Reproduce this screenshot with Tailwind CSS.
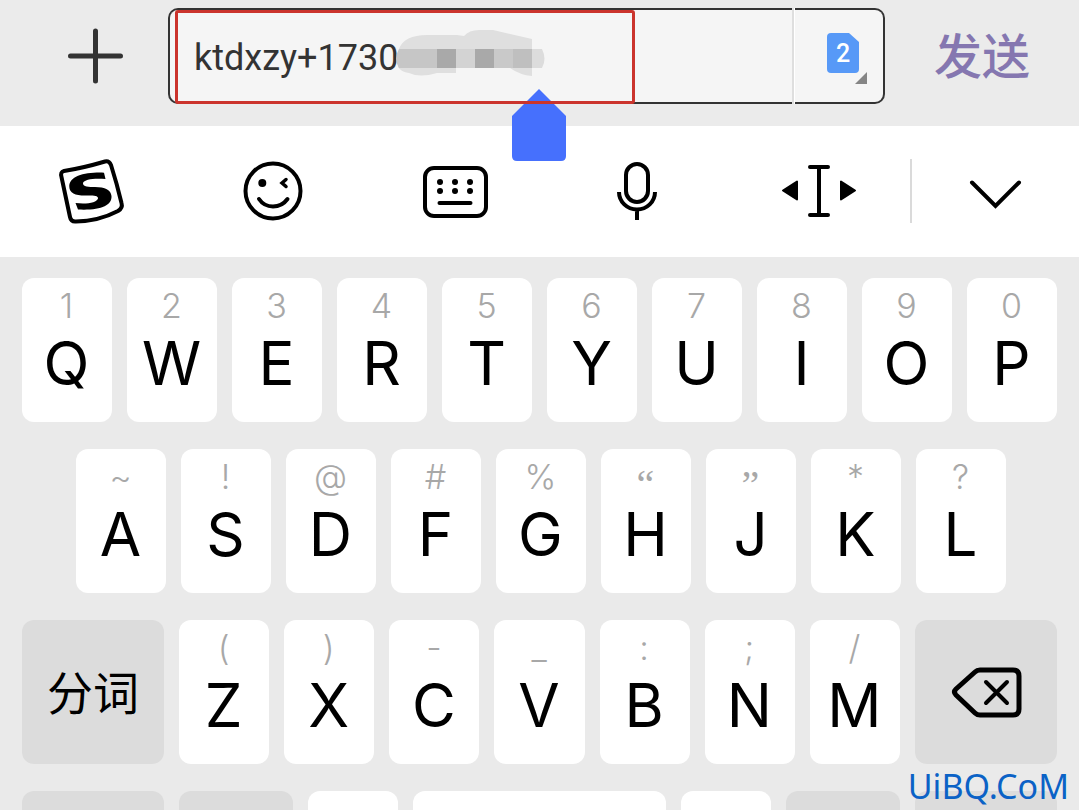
<!DOCTYPE html>
<html lang="zh-CN">
<head>
  <meta charset="UTF-8" />
  <meta name="viewport" content="width=device-width, initial-scale=1" />
  <title>发送短信</title>
  <script src="https://cdn.jsdelivr.net/npm/@tailwindcss/browser@4"></script>
</head>
<body class="h-screen overflow-hidden bg-[#eaeaea] font-[Roboto,'Noto_Sans_CJK_SC',sans-serif] relative">

  <!-- Message bar -->
  <header class="bg-[#ebebeb] flex items-center pt-2 pb-[22px]">
    <div class="w-[168px] shrink-0 pl-[68px]">
      <button class="block" aria-label="添加">
        <svg class="size-14" viewBox="0 0 56 56" fill="none" stroke="#333" stroke-width="5" stroke-linecap="round">
          <path d="M27.500 3v50M2.500 28h50" />
        </svg>
      </button>
    </div>

    <div class="relative flex-1 h-24 flex">
      <input type="text" aria-label="短信" value="ktdxzy+1730" class="flex-1 min-w-0 bg-[#f5f5f5] border-2 border-r-0 border-[#333] rounded-l-[10px] pl-6 pt-1 text-4xl text-[#333] outline-none" />
      <div class="w-[3px] bg-[#dedede] border-r border-white"></div>
      <button class="w-[90px] bg-[#f5f5f5] border-2 border-l-0 border-[#333] rounded-r-[10px] pl-2 flex justify-center items-center" aria-label="SIM 2">
        <svg class="w-12 h-14" viewBox="0 0 48 56">
          <path d="M12 5h18l10 9v27a4 4 0 0 1-4 4H12a4 4 0 0 1-4-4V9a4 4 0 0 1 4-4z" fill="#5799f7" />
          <path d="M39 56l12-12v12z" fill="#858585" transform="translate(-3)" />
          <text x="24" y="34" text-anchor="middle" font-size="25" font-weight="500" fill="#fff">2</text>
        </svg>
      </button>

      <!-- Blurred part of the number -->
      <svg class="absolute left-[227px] top-[22px] w-[150px] h-[47px]" viewBox="0 0 150 47">
        <path d="M4 19Q9 5 32 5H62L69 6Q74 0 84 0H98L137 9V46Q125 45 115 38H61V43H42Q25 48 14 43Q6 42 3 37z" fill="#dfdfdf" />
        <path d="M61 38h54v9H61z" fill="#f5f5f5" />
        <path d="M42 19V38H4Q-2 29 4 19z" fill="#c6c6c6" />
        <path d="M42 19h19v19H42zM80 19h19v19H80z" fill="#a9a9a9" />
        <path d="M61 19h19v19H61z" fill="#d3d3d3" />
        <path d="M99 19h19v19H99z" fill="#c9c9c9" />
        <path d="M118 19h19v19h-19z" fill="#bfbfbf" />
        <path d="M137 19h10q5 10 0 19h-10z" fill="#dcdcdc" />
      </svg>
      <!-- Cursor handle -->
      <svg class="absolute left-[344px] top-[81px] w-[54px] h-[72px]" viewBox="0 0 54 72">
        <path d="M27 0L54 27V67Q54 72 49 72H5Q0 72 0 67V27z" fill="#4670fd" />
      </svg>
      <div class="absolute left-[7px] top-[2px] w-[460px] h-[94px] border-3 border-[#cb342d] rounded-[3px]"></div>
    </div>

    <div class="w-[194px] shrink-0 pt-1 text-center">
      <button class="text-5xl font-medium text-[#8577b0]">发送</button>
    </div>
  </header>

  <!-- Toolbar -->
  <nav class="bg-white h-[131px] pb-0.5 flex items-center">
    <button class="flex-1 flex justify-center" aria-label="搜狗输入法">
      <svg class="size-20" viewBox="0 0 80 80">
        <path d="M13 20Q32 17 54 10.500Q58 9.500 60 14Q66 33 70.500 52Q72 57 67 60Q48 70 25 70.500Q20 71 19 66L10.500 26Q9 21 13 20z" fill="none" stroke="#000" stroke-width="4" />
        <path d="M53 21.700L54.500 28C44 27 33 28 32 32C31.500 36 38 36 44 36C54 36 60 39 60.500 45C61 55 49 59.500 27 58.500L24.500 52C36 53.500 46 51.500 47 47.500C47.500 44 40 44.500 34 44.500C24 44.500 18.500 42 18.300 36C18 25 34 21 53 21.700z" />
      </svg>
    </button>
    <button class="flex-1 flex justify-center" aria-label="表情">
      <svg class="size-20" viewBox="0 0 80 80" fill="none" stroke="#000" stroke-width="4" stroke-linecap="round">
        <circle cx="40" cy="40" r="27.500" />
        <circle cx="29.300" cy="32" r="4" fill="#000" stroke="none" />
        <path d="M53 28.500L49 32l4 3.500" stroke-width="3.500" />
        <path d="M26 48Q31 55.500 40 55.500T54.500 48" />
      </svg>
    </button>
    <button class="flex-1 flex justify-center" aria-label="键盘">
      <svg class="size-20" viewBox="0 0 80 80" fill="none" stroke="#000" stroke-width="4" stroke-linecap="round">
        <rect x="10" y="17" width="61" height="48" rx="9" />
        <path d="M24.500 52h31" />
        <path d="M25 31h.01M40 31h.01M55 31h.01M25 40h.01M40 40h.01M55 40h.01" stroke-width="6" />
      </svg>
    </button>
    <button class="flex-1 flex justify-center" aria-label="语音">
      <svg class="size-20" viewBox="0 0 80 80" fill="none" stroke="#000" stroke-width="4">
        <rect x="29" y="13" width="22" height="38" rx="11" />
        <path d="M22 41a18 17.500 0 0 0 36 0M40 58v11" />
      </svg>
    </button>
    <button class="flex-1 flex justify-center" aria-label="移动光标">
      <svg class="size-20" viewBox="0 0 80 80" stroke="#000" stroke-width="4" stroke-linecap="round" stroke-linejoin="round">
        <path d="M31 16h18M31 64h18M40 16v48" />
        <path d="M4 39.500l14-9v18zM76 39.500l-14-9v18z" stroke-width="2" />
      </svg>
    </button>
    <div class="w-0.5 h-16 bg-[#dadada]"></div>
    <button class="w-[167px] flex justify-center" aria-label="收起键盘">
      <svg class="size-20" viewBox="0 0 80 80" fill="none" stroke="#000" stroke-width="4" stroke-linecap="round">
        <path d="M16 31.500L39.500 55 63 31.500" />
      </svg>
    </button>
  </nav>

  <!-- Keyboard -->
  <main class="px-[22px] pt-[21px] flex flex-col gap-[27px]">
    <div id="row1" class="flex gap-[15px]"></div>
    <div id="row2" class="flex gap-[15px] pl-[54px] pr-[51px]"></div>
    <div class="flex gap-[15px]">
      <button class="w-[142px] h-36 rounded-xl bg-[#dcdcdc] text-[46px] pt-1">分词</button>
      <div id="row3" class="flex-1 flex gap-[15px]"></div>
      <button class="w-[142px] h-36 rounded-xl bg-[#dcdcdc] flex justify-center items-center" aria-label="删除">
        <svg class="w-[72px] h-14" viewBox="0 0 72 56" fill="none" stroke="#000" stroke-width="5" stroke-linecap="round" stroke-linejoin="round">
          <path d="M30 6h33q6 0 6 6v33q0 6-6 6H30q-3 0-5-2L6 31q-3-3 0-6L25 8q2-2 5-2z" />
          <path d="M36 18l21 21M57 18l-21 21" stroke-width="4" />
        </svg>
      </button>
    </div>
    <div class="flex gap-[15px]">
      <button class="w-[142px] h-36 rounded-xl bg-[#dcdcdc]" aria-label="符号"></button>
      <button class="w-[114px] h-36 rounded-xl bg-[#dcdcdc]" aria-label="数字"></button>
      <button class="w-[90px] h-36 rounded-xl bg-white" aria-label="逗号"></button>
      <button class="flex-1 h-36 rounded-xl bg-white" aria-label="空格"></button>
      <button class="w-[90px] h-36 rounded-xl bg-white" aria-label="句号"></button>
      <button class="w-[114px] h-36 rounded-xl bg-[#dcdcdc]" aria-label="中英文"></button>
      <button class="w-[142px] h-36 rounded-xl bg-[#dcdcdc]" aria-label="换行"></button>
    </div>
  </main>

  <!-- Watermark -->
  <div class="absolute right-[10px] bottom-1 font-['Noto_Sans',sans-serif] text-[34px] leading-10 text-[#0b62c6]">UiBQ.CoM</div>

  <script>
    const rows = {
      row1: ['1Q', '2W', '3E', '4R', '5T', '6Y', '7U', '8I', '9O', '0P'],
      row2: ['~A', '!S', '@D', '#F', '%G', '“H', '”J', '*K', '?L'],
      row3: ['(Z', ')X', '-C', '_V', ':B', ';N', '/M'],
    };

    Object.entries(rows).forEach(([id, keys]) => {
      const row = document.getElementById(id);
      keys.forEach(([hint, letter]) => {
        const key = document.createElement('button');
        key.className = 'flex-1 h-36 rounded-xl bg-white pt-2 pr-px flex flex-col items-center font-[Inter,sans-serif]';

        // Curly quotes come from a serif face and hang lower
        const hintEl = document.createElement('span');
        hintEl.className = '“”'.includes(hint)
          ? "h-10 text-[40px] leading-[56px] text-[#a8a8a8] font-['Liberation_Serif',serif]"
          : 'h-10 text-[34px] leading-10 font-light text-[#a8a8a8]';
        hintEl.textContent = hint;

        const letterEl = document.createElement('span');
        letterEl.className = 'text-[60px] leading-[74px] text-black';
        letterEl.textContent = letter;

        key.append(hintEl, letterEl);
        row.appendChild(key);
      });
    });
  </script>
</body>
</html>
